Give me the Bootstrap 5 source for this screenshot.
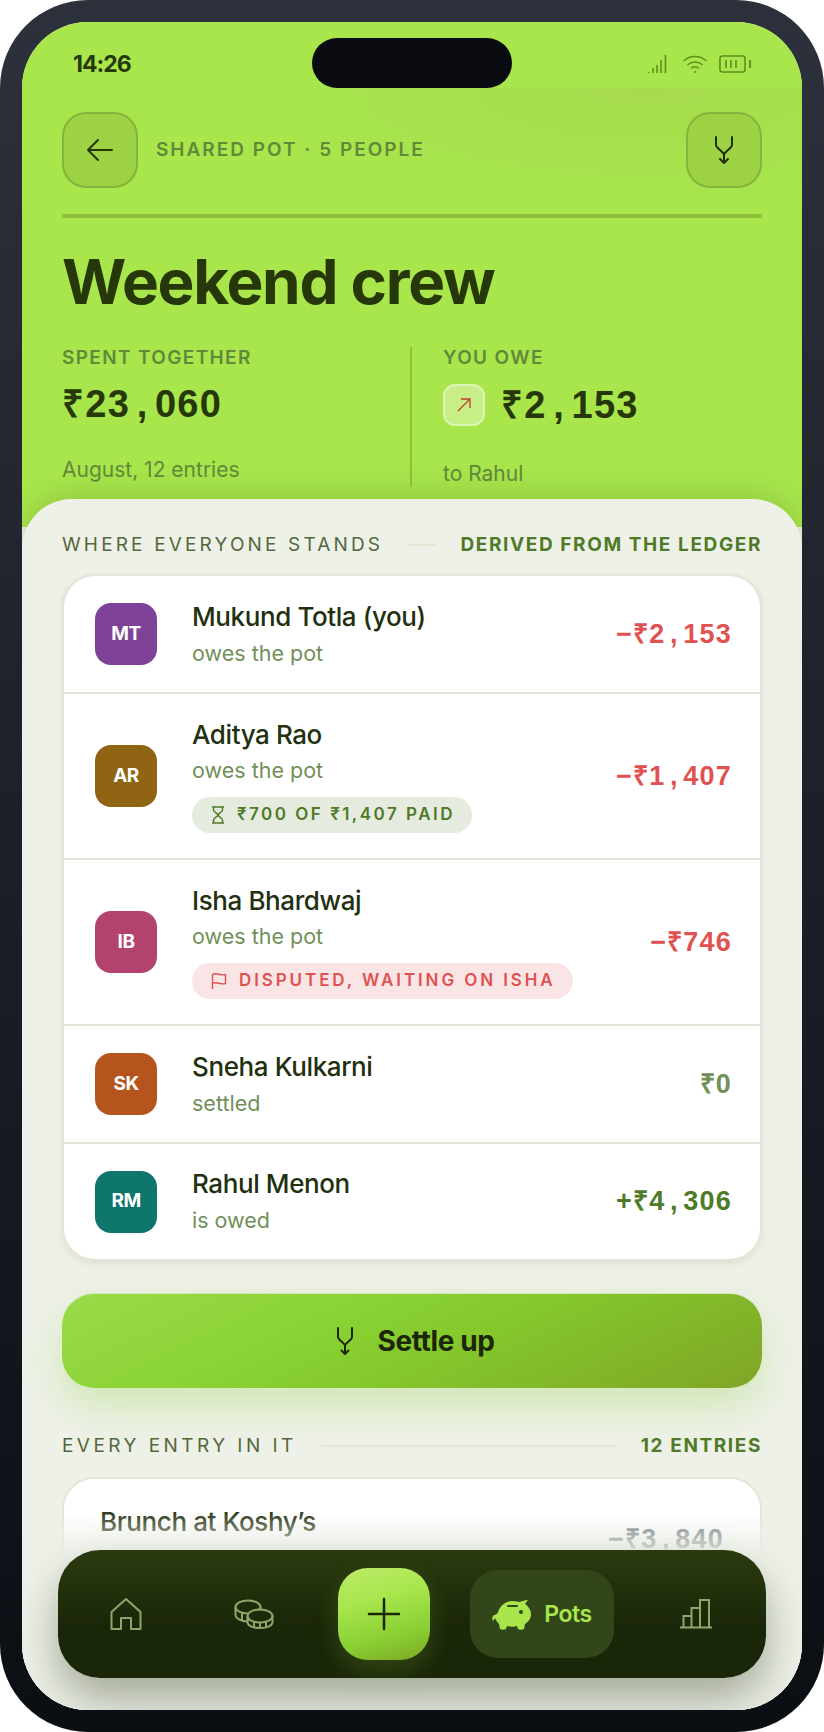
<!DOCTYPE html>
<html lang="en">
<head>
  <meta charset="UTF-8">
  <meta name="viewport" content="width=device-width, initial-scale=1.0">
  <title>Weekend crew</title>
  <link href="https://cdn.jsdelivr.net/npm/bootstrap@5.3.3/dist/css/bootstrap.min.css" rel="stylesheet">
  <style>
    body { margin: 0; background: #fff; font-family: Inter, sans-serif; color: #26380a; }
    .phone { width: 824px; height: 1732px; padding: 22px; border-radius: 88px; background: linear-gradient(180deg, #2d313b 0%, #1b1f28 50%, #0b0e13 100%); }
    .screen { position: relative; height: 1688px; border-radius: 66px; overflow: hidden; background: #eef1e8; }

    .hero { position: relative; height: 505px; background: #a8e64c; padding: 0 40px; }
    .hero-tint { position: absolute; top: 66px; right: 0; width: 520px; height: 110px; background: radial-gradient(ellipse at 70% 0%, rgba(160, 190, 80, .28), rgba(168, 230, 76, 0) 75%); }
    .statusbar { position: relative; height: 90px; padding: 24px 11px 0 11px; }
    .clock { font-size: 23px; font-weight: 700; letter-spacing: -1px; line-height: 36px; color: #26380a; }
    .island { position: absolute; top: 16px; left: 250px; width: 200px; height: 50px; border-radius: 25px; background: #0a0c11; }
    .topbar { position: relative; margin-bottom: 26px; }
    .square-btn { width: 76px; height: 76px; border-radius: 24px; background: #9dd244; border: 2px solid #86b33c; }
    .eyebrow { font-size: 19px; font-weight: 600; letter-spacing: 2px; color: #64883a; margin-left: 2px; padding-top: 1px; }
    .rule { height: 4px; background: #8fbf3f; margin-bottom: 29px; }
    .title { font-size: 62px; font-weight: 700; letter-spacing: -1.3px; line-height: 70px; color: #26380a; margin-bottom: 30px; }
    .stat-left { width: 350px; height: 140px; border-right: 2px solid #8fbf3f; }
    .stat-right { padding-left: 31px; }
    .stat-label { font-size: 19px; font-weight: 600; letter-spacing: 1.35px; line-height: 22px; color: #64883a; }
    .stat-gap-left { margin-bottom: 12px; }
    .stat-gap-right { margin-bottom: 13px; }
    .money { font-family: "Liberation Sans", sans-serif; font-weight: 700; }
    .money-sep { margin: 0 .17em; }
    .stat-value { font-size: 38px; letter-spacing: 1.3px; line-height: 46px; color: #26380a; }
    .stat-value-left { margin-bottom: 29px; }
    .stat-sub { font-size: 21px; line-height: 28px; color: #64883a; }
    .owe-row { margin-bottom: 32px; }
    .owe-box { width: 42px; height: 42px; border-radius: 12px; background: #c8ee88; border: 2px solid #dcf4b4; }

    .sheet { position: relative; margin-top: -28px; border-radius: 50px 50px 0 0; background: #eef1e8; padding: 30px 40px 0; box-shadow: 0 -8px 26px rgba(90, 120, 30, .22); }
    .section-head { height: 32px; font-size: 19px; }
    .section-name { letter-spacing: 3.15px; color: #55683c; white-space: nowrap; }
    .section-name-entries { letter-spacing: 3.45px; }
    .section-line { height: 2px; background: #e2e7d6; }
    .section-note { font-weight: 700; letter-spacing: 1.6px; color: #4f7a28; white-space: nowrap; }

    .ledger { margin-top: 13px; border-radius: 32px; border: 2px solid #e2e6d8; overflow: hidden; box-shadow: 0 3px 6px rgba(60, 80, 20, .1); }
    .ledger .list-group-item { padding: 0 28px 0 31px; border-color: #e0e7d6; border-width: 0 0 2px; }
    .ledger .list-group-item:last-child { border-width: 0; height: 115px; }
    .short-row { height: 118px; }
    .tall-row { height: 166px; }
    .tall-row .person-sub { margin-top: 4px; }
    .avatar { width: 62px; height: 62px; border-radius: 16px; color: #fff; font-size: 19px; font-weight: 700; letter-spacing: -.5px; margin-right: 35px; flex-shrink: 0; }
    .person-name { font-size: 26px; font-weight: 500; letter-spacing: -.4px; line-height: 32px; color: #22300f; }
    .person-sub { font-size: 21.5px; line-height: 30px; margin-top: 5px; color: #72905a; }
    .status-pill { height: 36px; border-radius: 18px; padding: 0 17px 0 19px; margin-top: 12px; font-size: 17px; font-weight: 600; }
    .pill-paid { background: #e6ebe0; color: #4f7a28; letter-spacing: 2.5px; }
    .pill-disputed { background: #f9e5e5; color: #e05252; letter-spacing: 2.9px; }
    .row-amount { font-size: 27px; letter-spacing: 1.2px; }
    .amount-owes { color: #e05252; }
    .amount-zero { color: #72905a; }
    .amount-owed { color: #4f7a28; }
    .amount-entry { color: #6c757d; margin-top: 13px; }

    .settle { display: flex; width: 700px; height: 94px; margin: 33px 0 42px; padding-left: 18px; border: 0; border-radius: 32px; background: linear-gradient(155deg, #9ada48 0%, #8ad335 35%, #84c82c 55%, #80a526 100%); box-shadow: 0 -1px 0 #d3e8b5, 0 18px 40px rgba(132, 204, 46, .28); font-size: 28px; font-weight: 700; letter-spacing: -.4px; color: #1c2608; }
    .settle:hover { background: #84c82c; color: #1c2608; }
    .entry-card { margin-top: 15px; height: 260px; border-radius: 32px; border: 2px solid #e2e6d8; padding: 27px 36px; }
    .fade-out { position: absolute; left: 0; right: 0; bottom: 0; height: 200px; background: linear-gradient(180deg, rgba(238, 241, 232, 0) 0%, #eef1e8 24%); }

    .tabbar { position: absolute; left: 36px; bottom: 32px; width: 708px; height: 128px; border-radius: 42px; background: linear-gradient(180deg, #2b3b10 0%, #1a2608 60%); box-shadow: 0 22px 44px rgba(26, 38, 8, .35); }
    .tab { height: 100%; }
    .tab-home { width: 136px; }
    .tab-coins { width: 120px; }
    .tab-add { width: 92px; height: 92px; margin-left: 24px; border-radius: 30px; background: linear-gradient(165deg, #bdeb6a 0%, #a8e64c 35%, #88cf32 72%, #7fa526 100%); box-shadow: 0 10px 26px rgba(168, 230, 76, .18); }
    .tab-pots { width: 144px; height: 88px; margin-left: 40px; border-radius: 28px; background: #33461a; font-size: 23px; font-weight: 600; letter-spacing: -.4px; color: #a8e64c; gap: 12px; }
    .tab-chart { width: 136px; margin-left: 14px; }
  </style>
</head>
<body>
  <div class="phone">
    <div class="screen">

      <!-- Header -->
      <div class="hero">
        <div class="hero-tint"></div>
        <div class="statusbar d-flex justify-content-between align-items-start">
          <span class="clock">14:26</span>
          <div class="island"></div>
          <div class="d-flex align-items-center gap-3 pt-2">
            <svg width="20" height="20" viewBox="0 0 20 20" fill="none" stroke="#5f8f1f" stroke-width="1.6"><path d="M1.5 19v-1M6 19v-5M10 19v-8M14 19V6M18.500 19V1"/></svg>
            <svg width="24" height="20" viewBox="0 0 24 20" fill="none" stroke="#5f8f1f" stroke-width="1.5" stroke-linecap="round"><path d="M1 6.500C7 1 17 1 23 6.500M5 10.500c4-3.400 10-3.400 14 0M8.500 14c2-1.500 5-1.500 7 0"/><circle cx="12" cy="18" r="1" fill="#5f8f1f" stroke="none"/></svg>
            <svg width="32" height="18" viewBox="0 0 32 18" fill="none" stroke="#5f8f1f" stroke-width="1.600" style="margin-left:-4px"><rect x="1" y="1" width="25" height="16" rx="2.500"/><path d="M7 5v8M12 5v8M17 5v8"/><path d="M31 5v8" stroke-width="2"/></svg>
          </div>
        </div>

        <div class="topbar d-flex align-items-center justify-content-between">
          <div class="d-flex align-items-center gap-3">
            <div class="square-btn d-flex align-items-center justify-content-center">
              <svg width="28" height="24" viewBox="0 0 28 24" fill="none" stroke="#26380a" stroke-width="2" stroke-linecap="round" stroke-linejoin="round"><path d="M26 12H2M12 2 2 12l10 10"/></svg>
            </div>
            <span class="eyebrow">SHARED POT · 5 PEOPLE</span>
          </div>
          <div class="square-btn d-flex align-items-center justify-content-center">
            <svg width="20" height="30" viewBox="0 0 20 30" fill="none" stroke="#1f2e0a" stroke-width="2" stroke-linecap="round" stroke-linejoin="round"><path d="M2 2v8c0 3 8 7 8 10 0-3 8-7 8-10V2M10 20v8M6 24l4 4 4-4"/></svg>
          </div>
        </div>

        <div class="rule"></div>
        <h1 class="title">Weekend crew</h1>

        <div class="d-flex">
          <div class="stat-left">
            <div class="stat-label stat-gap-left">SPENT TOGETHER</div>
            <div class="money stat-value stat-value-left">₹23<span class="money-sep">,</span>060</div>
            <div class="stat-sub">August, 12 entries</div>
          </div>
          <div class="stat-right">
            <div class="stat-label stat-gap-right">YOU OWE</div>
            <div class="owe-row d-flex align-items-center gap-3">
              <div class="owe-box d-flex align-items-center justify-content-center">
                <svg width="16" height="16" viewBox="0 0 16 16" fill="none" stroke="#c0402f" stroke-width="1.300"><path d="M2 14 14 2M5 2h9v9"/></svg>
              </div>
              <div class="money stat-value">₹2<span class="money-sep">,</span>153</div>
            </div>
            <div class="stat-sub">to Rahul</div>
          </div>
        </div>
      </div>

      <!-- Ledger -->
      <div class="sheet">
        <div class="section-head d-flex align-items-center">
          <span class="section-name">WHERE EVERYONE STANDS</span>
          <span class="section-line flex-grow-1 mx-4"></span>
          <span class="section-note">DERIVED FROM THE LEDGER</span>
        </div>

        <ul class="ledger list-group">
          <li class="list-group-item short-row d-flex align-items-center">
            <div class="avatar d-flex align-items-center justify-content-center" style="background:#7f4299">MT</div>
            <div class="flex-grow-1">
              <div class="person-name">Mukund Totla (you)</div>
              <div class="person-sub">owes the pot</div>
            </div>
            <div class="money row-amount amount-owes">−₹2<span class="money-sep">,</span>153</div>
          </li>
          <li class="list-group-item tall-row d-flex align-items-center">
            <div class="avatar d-flex align-items-center justify-content-center" style="background:#8f6412">AR</div>
            <div class="flex-grow-1">
              <div class="person-name">Aditya Rao</div>
              <div class="person-sub">owes the pot</div>
              <div class="status-pill pill-paid d-inline-flex align-items-center gap-2">
                <svg width="14" height="18" viewBox="0 0 14 18" fill="none" stroke="#4f7a28" stroke-width="1.500" class="me-1"><path d="M1 1h12M1 17h12M2.500 1v3c0 2 4.500 3.500 4.500 5 0-1.500 4.500-3 4.500-5V1M2.500 17v-3c0-2 4.500-3.500 4.500-5 0 1.500 4.500 3 4.500 5v3"/></svg>
                ₹700 OF ₹1,407 PAID
              </div>
            </div>
            <div class="money row-amount amount-owes">−₹1<span class="money-sep">,</span>407</div>
          </li>
          <li class="list-group-item tall-row d-flex align-items-center">
            <div class="avatar d-flex align-items-center justify-content-center" style="background:#b3436e">IB</div>
            <div class="flex-grow-1">
              <div class="person-name">Isha Bhardwaj</div>
              <div class="person-sub">owes the pot</div>
              <div class="status-pill pill-disputed d-inline-flex align-items-center gap-2">
                <svg width="16" height="18" viewBox="0 0 16 18" fill="none" stroke="#e05252" stroke-width="1.400" stroke-linejoin="round" class="me-1"><path d="M1.500 17V2.500c4-2.500 8 1.800 13 0v9c-5 1.800-9-2.500-13 0"/></svg>
                DISPUTED, WAITING ON ISHA
              </div>
            </div>
            <div class="money row-amount amount-owes">−₹746</div>
          </li>
          <li class="list-group-item short-row d-flex align-items-center">
            <div class="avatar d-flex align-items-center justify-content-center" style="background:#b5551d">SK</div>
            <div class="flex-grow-1">
              <div class="person-name">Sneha Kulkarni</div>
              <div class="person-sub">settled</div>
            </div>
            <div class="money row-amount amount-zero">₹0</div>
          </li>
          <li class="list-group-item short-row d-flex align-items-center">
            <div class="avatar d-flex align-items-center justify-content-center" style="background:#0f766e">RM</div>
            <div class="flex-grow-1">
              <div class="person-name">Rahul Menon</div>
              <div class="person-sub">is owed</div>
            </div>
            <div class="money row-amount amount-owed">+₹4<span class="money-sep">,</span>306</div>
          </li>
        </ul>

        <button type="button" class="btn settle align-items-center justify-content-center gap-4">
          <svg width="18" height="30" viewBox="0 0 18 30" fill="none" stroke="#1c2608" stroke-width="2" stroke-linecap="round" stroke-linejoin="round"><path d="M2 2v9c0 3 7 6 7 9 0-3 7-6 7-9V2M9 20v8M5.500 24.500 9 28l3.500-3.500"/></svg>
          Settle up
        </button>

        <div class="section-head d-flex align-items-center">
          <span class="section-name section-name-entries">EVERY ENTRY IN IT</span>
          <span class="section-line flex-grow-1 mx-4"></span>
          <span class="section-note">12 ENTRIES</span>
        </div>

        <div class="entry-card bg-white d-flex justify-content-between">
          <div class="person-name">Brunch at Koshy’s</div>
          <div class="money row-amount amount-entry">−₹3<span class="money-sep">,</span>840</div>
        </div>
      </div>

      <div class="fade-out"></div>

      <!-- Bottom tabs -->
      <nav class="tabbar d-flex align-items-center">
        <div class="tab tab-home d-flex align-items-center justify-content-center">
          <svg width="32" height="32" viewBox="0 0 32 32" fill="none" stroke="#8fa66b" stroke-width="2" stroke-linejoin="round"><path d="M1.500 14 16 1 30.500 14v17H21V20H11v11H1.500z"/></svg>
        </div>
        <div class="tab tab-coins d-flex align-items-center justify-content-center">
          <svg width="40" height="30" viewBox="0 0 40 30" fill="none" stroke="#8fa66b" stroke-width="2"><ellipse cx="14" cy="8" rx="12.500" ry="6.500"/><path d="M1.500 8v8c0 3 5 6.500 12.500 6.500M8 14v7M14 15v7M21 13v5M26.500 8v5"/><ellipse cx="26" cy="17" rx="12.500" ry="6.500" fill="#1d2a09"/><path d="M13.500 17v6c0 3.500 5 6 12.500 6s12.500-2.500 12.500-6v-6M20 23v5M26 24v5M32 23v5"/></svg>
        </div>
        <div class="tab-add d-flex align-items-center justify-content-center">
          <svg width="34" height="34" viewBox="0 0 34 34" fill="none" stroke="#1c2608" stroke-width="2.500" stroke-linecap="round"><path d="M17 2v30M2 17h30"/></svg>
        </div>
        <div class="tab-pots d-flex align-items-center justify-content-center">
          <svg width="40" height="32" viewBox="0 0 40 32" fill="#a8e64c"><path d="M2 17c2 0 3-1 4-3 2-7 8-11 14-11 3 0 6 1 8 1 2-1 5-2 8-2l-3 4c3 2 6 6 6 10 0 5-3 8-6 10l-1 5c-2 1-4 1-6 0l-1-3c-3 1-7 1-10 0l-1 3c-2 1-4 1-6 0l-1-5c-2-2-3-4-4-6l-2 3-1-3z"/><path d="M16 8h9" stroke="#33461a" stroke-width="2" stroke-linecap="round"/><circle cx="29" cy="14" r="2" fill="#33461a"/></svg>
          Pots
        </div>
        <div class="tab tab-chart d-flex align-items-center justify-content-center">
          <svg width="32" height="30" viewBox="0 0 32 30" fill="none" stroke="#8fa66b" stroke-width="2"><path d="M0 28.500h32M3.500 28V17h8v11M11.500 28V9h8.500v19M20 28V1h9v27"/></svg>
        </div>
      </nav>
    </div>
  </div>

  <script src="https://cdn.jsdelivr.net/npm/bootstrap@5.3.3/dist/js/bootstrap.bundle.min.js"></script>
</body>
</html>
